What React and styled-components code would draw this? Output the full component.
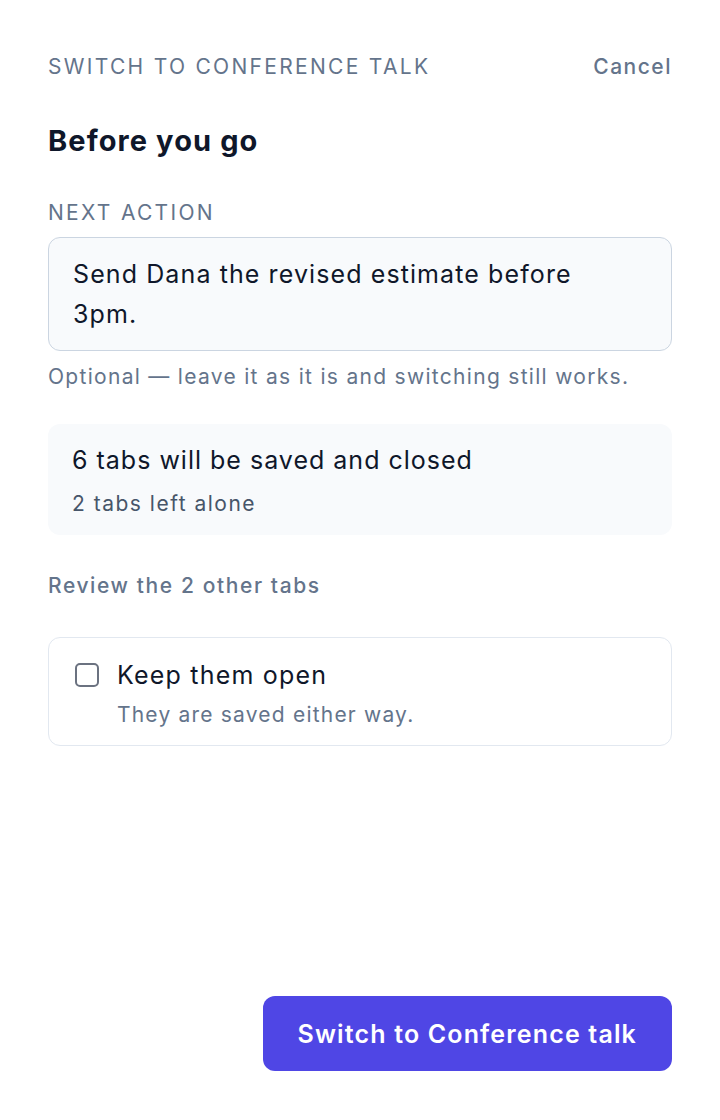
import React from "react";
import styled, { createGlobalStyle } from "styled-components";

const GlobalStyle = createGlobalStyle`
  * { box-sizing: border-box; }
  html, body { margin: 0; padding: 0; background: #ffffff; }
  body {
    font-family: Inter, "Noto Sans", "Liberation Sans", sans-serif;
    color: #0f172a;
    -webkit-font-smoothing: antialiased;
  }
`;

const Page = styled.div`
  min-height: 100vh;
  display: flex;
  flex-direction: column;
  padding: 52px 48px 49px;
`;

const Header = styled.div`
  display: flex;
  justify-content: space-between;
  align-items: center;
  line-height: 30px;
`;

const Eyebrow = styled.span`
  font-size: 21px;
  letter-spacing: 2.3px;
  text-transform: uppercase;
  color: #64748b;
`;

const CancelButton = styled.button`
  border: none;
  background: none;
  padding: 0;
  font: inherit;
  font-size: 21px;
  font-weight: 500;
  letter-spacing: 1.5px;
  color: #64748b;
  cursor: pointer;
`;

const Title = styled.h1`
  margin: 41px 0 0;
  font-size: 29px;
  line-height: 36px;
  font-weight: 700;
  letter-spacing: 1.1px;
  color: #0f172a;
`;

const FieldLabel = styled.label`
  display: block;
  margin-top: 40px;
  font-size: 21px;
  line-height: 28px;
  letter-spacing: 2.3px;
  text-transform: uppercase;
  color: #64748b;
`;

const NoteInput = styled.textarea`
  display: block;
  width: 100%;
  margin-top: 10px;
  height: 114px;
  padding: 16px 64px 16px 24px;
  border: 1px solid #cbd5e1;
  border-radius: 12px;
  background: #f8fafc;
  font: inherit;
  font-size: 25px;
  line-height: 40px;
  letter-spacing: 1.1px;
  color: #0f172a;
  resize: none;
  outline: none;
  overflow: hidden;
`;

const Hint = styled.p`
  margin: 12px 0 0;
  font-size: 21px;
  line-height: 28px;
  letter-spacing: 1.3px;
  color: #64748b;
`;

const Summary = styled.div`
  margin-top: 33px;
  padding: 20px 24px 17px;
  border-radius: 12px;
  background: #f8fafc;
`;

const SummaryMain = styled.div`
  font-size: 25px;
  line-height: 32px;
  letter-spacing: 1px;
  color: #0f172a;
`;

const SummarySub = styled.div`
  margin-top: 14px;
  font-size: 21px;
  line-height: 28px;
  letter-spacing: 1.5px;
  color: #475569;
`;

const SectionTitle = styled.div`
  margin-top: 37px;
  font-size: 21px;
  line-height: 28px;
  font-weight: 500;
  letter-spacing: 1.6px;
  color: #64748b;
`;

const OptionCard = styled.label`
  margin-top: 37px;
  display: flex;
  gap: 18px;
  align-items: flex-start;
  padding: 21px 26px 16px;
  border: 1px solid #e2e8f0;
  border-radius: 12px;
  cursor: pointer;
`;

const Checkbox = styled.input.attrs({ type: "checkbox" })`
  appearance: none;
  flex: none;
  width: 24px;
  height: 24px;
  margin: 4px 0 0;
  border: 2px solid #6b7280;
  border-radius: 5px;
  background: #ffffff;
`;

const OptionText = styled.div`
  display: flex;
  flex-direction: column;
`;

const OptionTitle = styled.span`
  font-size: 25px;
  line-height: 32px;
  letter-spacing: 1.2px;
  color: #0f172a;
`;

const OptionSub = styled.span`
  margin-top: 10px;
  font-size: 21px;
  line-height: 28px;
  letter-spacing: 1.2px;
  color: #64748b;
`;

const Footer = styled.div`
  margin-top: auto;
  display: flex;
  justify-content: flex-end;
`;

const PrimaryButton = styled.button`
  height: 75px;
  padding: 0 35px;
  border: none;
  border-radius: 12px;
  background: #4f46e5;
  color: #ffffff;
  font: inherit;
  font-size: 25px;
  font-weight: 600;
  letter-spacing: 1.15px;
  cursor: pointer;
`;

export default function App() {
  return (
    <>
      <GlobalStyle />
      <Page>
        <Header>
          <Eyebrow>Switch to Conference talk</Eyebrow>
          <CancelButton>Cancel</CancelButton>
        </Header>

        <Title>Before you go</Title>

        <FieldLabel htmlFor="next-action">Next action</FieldLabel>
        <NoteInput
          id="next-action"
          rows={2}
          defaultValue="Send Dana the revised estimate before 3pm."
        />
        <Hint>Optional — leave it as it is and switching still works.</Hint>

        <Summary>
          <SummaryMain>6 tabs will be saved and closed</SummaryMain>
          <SummarySub>2 tabs left alone</SummarySub>
        </Summary>

        <SectionTitle>Review the 2 other tabs</SectionTitle>

        <OptionCard>
          <Checkbox />
          <OptionText>
            <OptionTitle>Keep them open</OptionTitle>
            <OptionSub>They are saved either way.</OptionSub>
          </OptionText>
        </OptionCard>

        <Footer>
          <PrimaryButton>Switch to Conference talk</PrimaryButton>
        </Footer>
      </Page>
    </>
  );
}
